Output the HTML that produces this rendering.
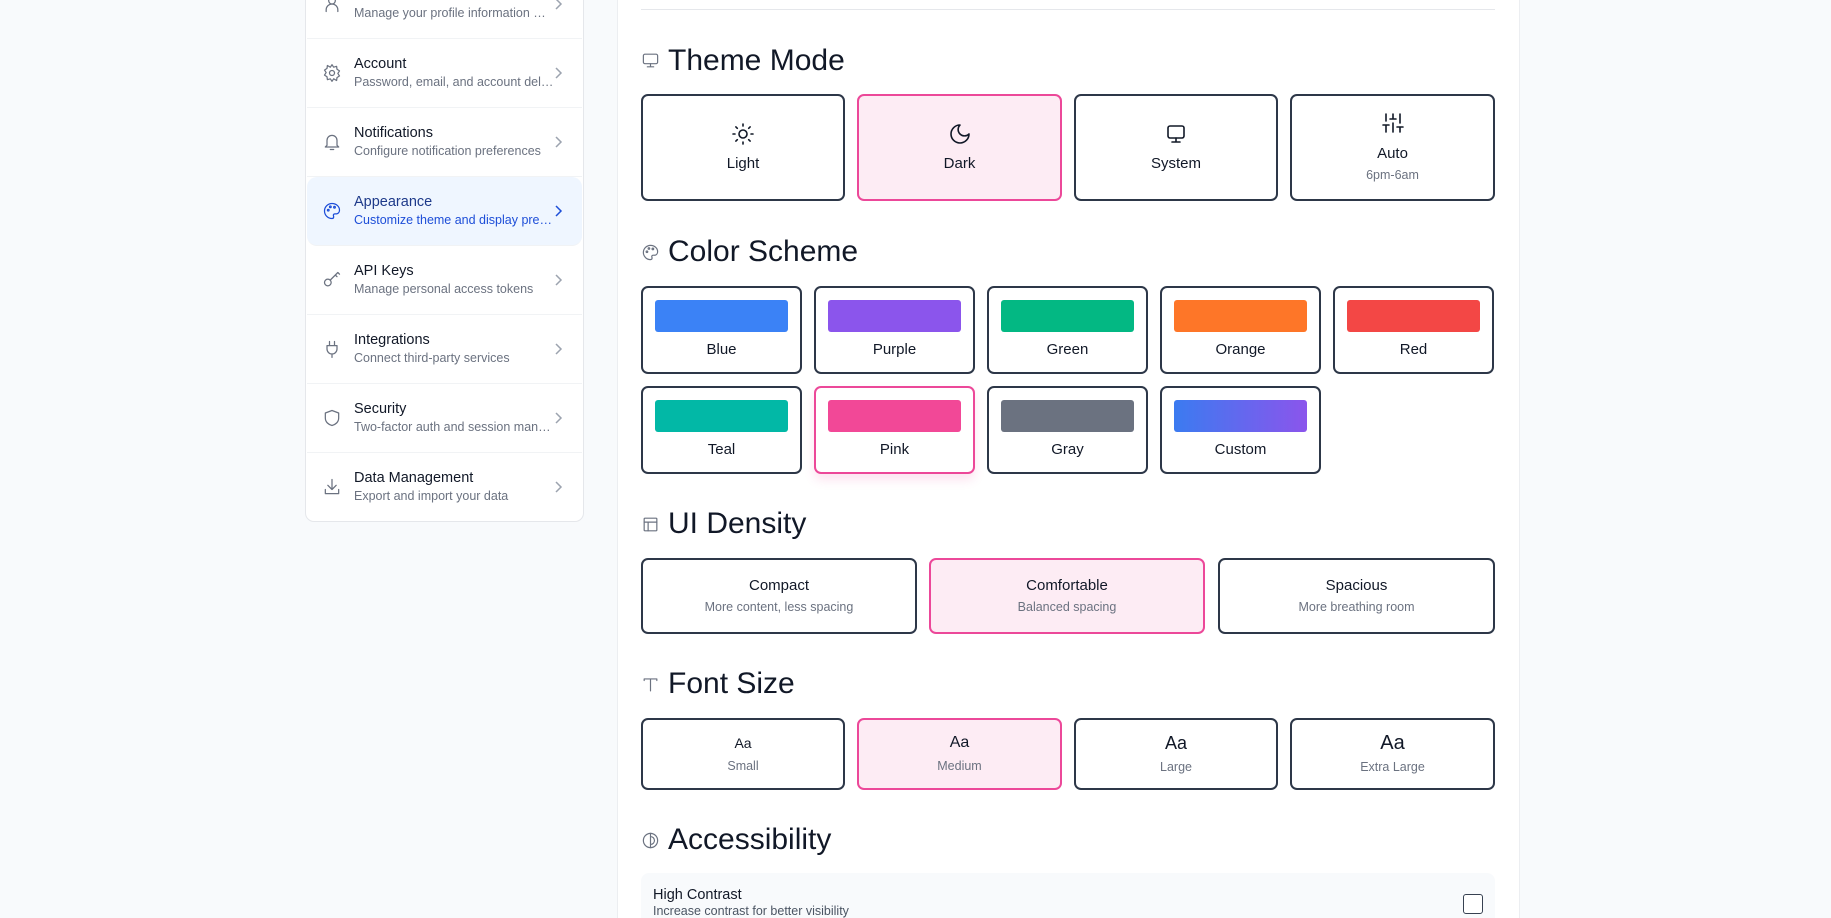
<!DOCTYPE html>
<html><head><meta charset="utf-8"><style>
*{box-sizing:border-box;margin:0;padding:0}
html{width:1831px;height:918px;overflow:hidden}
body{width:1831px;height:918px;overflow:hidden;background:#f8fafc;font-family:"Liberation Sans",sans-serif;color:#111827;position:relative}
.side{position:absolute;left:305px;top:-31px;width:279px;height:553px;background:#fff;border:1px solid #e5e7eb;border-radius:9px;overflow:hidden}
.item{position:absolute;left:1px;width:275px;height:69px;border-bottom:1px solid #f1f3f5}
.item.act{background:#eff6ff;border-radius:10px}
.item svg.ic{position:absolute;left:15px;top:24px;width:20px;height:20px;fill:none;stroke:#6b7280;stroke-width:1.5;stroke-linecap:round;stroke-linejoin:round}
.item.act svg.ic{stroke:#1d4ed8}
.item .t{position:absolute;left:47px;top:17px;font-size:14.5px;color:#111827}
.item .s{position:absolute;left:47px;top:36px;font-size:12.5px;color:#6b7280;white-space:nowrap}
.item.act .t{color:#1e3a8a}.item.act .s{color:#1d4ed8}
.item .ch{position:absolute;left:246px;top:27px;width:10px;height:14px;fill:none;stroke:#9ca3af;stroke-width:1.5}
.item.act .ch{stroke:#1d4ed8}
.main{position:absolute;left:617px;top:-10px;width:903px;height:928px;background:#fff;border-left:1px solid #eceef1;border-right:1px solid #eceef1}
.hr{position:absolute;left:641px;top:9px;width:854px;height:1px;background:#e5e7eb}
h2{position:absolute;left:668px;font-size:30px;font-weight:normal;color:#111827;line-height:36px}
.hi{position:absolute;left:641px;width:19px;height:19px;fill:none;stroke:#6b7280;stroke-width:1.5;stroke-linecap:round;stroke-linejoin:round}
.card{position:absolute;border:2px solid #2d3748;border-radius:7px;background:#fff;text-align:center}
.card.sel{border-color:#ec4899;background:#fdecf4}
.lbl{font-size:15px;color:#111827}
.sub{font-size:12.5px;color:#6b7280}
.sw{position:absolute;left:12px;right:12px;top:12px;height:32px;border-radius:3px}
.card .cl{position:absolute;left:0;right:0;top:53px;font-size:15px}
.card svg{width:24px;height:24px;fill:none;stroke:#111827;stroke-width:1.6;stroke-linecap:round;stroke-linejoin:round}
</style></head><body>
<div class="side">
 <div class="item" style="top:0"><svg class="ic" viewBox="0 0 24 24"><circle cx="12" cy="8" r="4"/><path d="M5 21v-2a7 7 0 0 1 14 0v2"/></svg><div class="t">Profile</div><div class="s">Manage your profile information …</div><svg class="ch" viewBox="0 0 10 14"><path d="M3 2l5 5-5 5"/></svg></div>
 <div class="item" style="top:69px"><svg class="ic" viewBox="0 0 24 24"><circle cx="12" cy="12" r="3"/><path d="M12 2l2 3 3.5-1 .5 3.5 3 2-2 3 2 3-3 2-.5 3.5L14 19l-2 3-2-3-3.5 1-.5-3.5-3-2 2-3-2-3 3-2 .5-3.5L10 5z"/></svg><div class="t">Account</div><div class="s">Password, email, and account del…</div><svg class="ch" viewBox="0 0 10 14"><path d="M3 2l5 5-5 5"/></svg></div>
 <div class="item" style="top:138px"><svg class="ic" viewBox="0 0 24 24"><path d="M6 16V10a6 6 0 0 1 12 0v6l2 2H4z"/><path d="M10 21h4"/></svg><div class="t">Notifications</div><div class="s">Configure notification preferences</div><svg class="ch" viewBox="0 0 10 14"><path d="M3 2l5 5-5 5"/></svg></div>
 <div class="item act" style="top:207px"><svg class="ic" viewBox="0 0 24 24"><path d="M12 3a9 9 0 1 0 0 18c1.5 0 2-1 2-2s-1-2 0-3 2-.5 3.5-.5A4.5 4.5 0 0 0 21 11c0-4.5-4-8-9-8z"/><circle cx="7.5" cy="11" r="1"/><circle cx="10" cy="7" r="1"/><circle cx="15" cy="7.5" r="1"/></svg><div class="t">Appearance</div><div class="s">Customize theme and display pre…</div><svg class="ch" viewBox="0 0 10 14"><path d="M3 2l5 5-5 5"/></svg></div>
 <div class="item" style="top:276px"><svg class="ic" viewBox="0 0 24 24"><circle cx="7" cy="15" r="4"/><path d="M10 12l9-9M16 6l2 2M19 3l2 2"/></svg><div class="t">API Keys</div><div class="s">Manage personal access tokens</div><svg class="ch" viewBox="0 0 10 14"><path d="M3 2l5 5-5 5"/></svg></div>
 <div class="item" style="top:345px"><svg class="ic" viewBox="0 0 24 24"><path d="M9 3v5M15 3v5M6 8h12v4a6 6 0 0 1-12 0zM12 18v4"/></svg><div class="t">Integrations</div><div class="s">Connect third-party services</div><svg class="ch" viewBox="0 0 10 14"><path d="M3 2l5 5-5 5"/></svg></div>
 <div class="item" style="top:414px"><svg class="ic" viewBox="0 0 24 24"><path d="M12 3l8 3v6c0 5-4 8-8 9-4-1-8-4-8-9V6z"/></svg><div class="t">Security</div><div class="s">Two-factor auth and session man…</div><svg class="ch" viewBox="0 0 10 14"><path d="M3 2l5 5-5 5"/></svg></div>
 <div class="item" style="top:483px;border:none"><svg class="ic" viewBox="0 0 24 24"><path d="M12 3v12M7 10l5 5 5-5M4 15v5h16v-5"/></svg><div class="t">Data Management</div><div class="s">Export and import your data</div><svg class="ch" viewBox="0 0 10 14"><path d="M3 2l5 5-5 5"/></svg></div>
</div>
<div class="main"></div>
<div class="hr"></div>

<svg class="hi" style="top:51px" viewBox="0 0 24 24"><rect x="3" y="4" width="18" height="12" rx="2"/><path d="M12 16v4M8 20h8"/></svg>
<h2 style="top:43px">Theme Mode</h2>
<div class="card" style="left:641px;top:94px;width:204px;height:107px"><svg style="margin-top:26px" viewBox="0 0 24 24"><circle cx="12" cy="12" r="4"/><path d="M12 2v2M12 20v2M4.9 4.9l1.4 1.4M17.7 17.7l1.4 1.4M2 12h2M20 12h2M4.9 19.1l1.4-1.4M17.7 6.3l1.4-1.4"/></svg><div class="lbl" style="margin-top:4px">Light</div></div>
<div class="card sel" style="left:857px;top:94px;width:205px;height:107px"><svg style="margin-top:26px" viewBox="0 0 24 24"><path d="M12 3a6 6 0 0 0 9 9 9 9 0 1 1-9-9z"/></svg><div class="lbl" style="margin-top:4px">Dark</div></div>
<div class="card" style="left:1074px;top:94px;width:204px;height:107px"><svg style="margin-top:26px" viewBox="0 0 24 24"><rect x="4" y="4" width="16" height="12" rx="2"/><path d="M12 16v4M8 20h8"/></svg><div class="lbl" style="margin-top:4px">System</div></div>
<div class="card" style="left:1290px;top:94px;width:205px;height:107px"><svg style="margin-top:15px" viewBox="0 0 24 24"><path d="M5 21v-7M5 10V3M12 21v-9M12 8V3M19 21v-5M19 12V3M2 14h6M9 8h6M16 16h6"/></svg><div class="lbl" style="margin-top:5px">Auto</div><div class="sub" style="margin-top:6px">6pm-6am</div></div>

<svg class="hi" style="top:243px" viewBox="0 0 24 24"><path d="M12 3a9 9 0 1 0 0 18c1.5 0 2-1 2-2s-1-2 0-3 2-.5 3.5-.5A4.5 4.5 0 0 0 21 11c0-4.5-4-8-9-8z"/><circle cx="7.5" cy="11" r="1"/><circle cx="10" cy="7" r="1"/><circle cx="15" cy="7.5" r="1"/></svg>
<h2 style="top:234px">Color Scheme</h2>
<div class="card" style="left:641px;top:286px;width:161px;height:88px"><div class="sw" style="background:#3b82f6"></div><div class="cl">Blue</div></div>
<div class="card" style="left:814px;top:286px;width:161px;height:88px"><div class="sw" style="background:#8b55ec"></div><div class="cl">Purple</div></div>
<div class="card" style="left:987px;top:286px;width:161px;height:88px"><div class="sw" style="background:#03b883"></div><div class="cl">Green</div></div>
<div class="card" style="left:1160px;top:286px;width:161px;height:88px"><div class="sw" style="background:#fe7628"></div><div class="cl">Orange</div></div>
<div class="card" style="left:1333px;top:286px;width:161px;height:88px"><div class="sw" style="background:#f34745"></div><div class="cl">Red</div></div>
<div class="card" style="left:641px;top:386px;width:161px;height:88px"><div class="sw" style="background:#02b8a6"></div><div class="cl">Teal</div></div>
<div class="card sel" style="left:814px;top:386px;width:161px;height:88px;background:#fff;box-shadow:0 6px 10px rgba(236,72,153,.15)"><div class="sw" style="background:#f24897"></div><div class="cl">Pink</div></div>
<div class="card" style="left:987px;top:386px;width:161px;height:88px"><div class="sw" style="background:#6b7280"></div><div class="cl">Gray</div></div>
<div class="card" style="left:1160px;top:386px;width:161px;height:88px"><div class="sw" style="background:linear-gradient(90deg,#3b7bf0,#8b55ec)"></div><div class="cl">Custom</div></div>

<svg class="hi" style="top:515px" viewBox="0 0 24 24"><rect x="4" y="4" width="16" height="16" rx="1"/><path d="M4 9h16M9 9v11"/></svg>
<h2 style="top:506px">UI Density</h2>
<div class="card" style="left:641px;top:558px;width:276px;height:76px"><div class="lbl" style="margin-top:17px">Compact</div><div class="sub" style="margin-top:6px">More content, less spacing</div></div>
<div class="card sel" style="left:929px;top:558px;width:276px;height:76px"><div class="lbl" style="margin-top:17px">Comfortable</div><div class="sub" style="margin-top:6px">Balanced spacing</div></div>
<div class="card" style="left:1218px;top:558px;width:277px;height:76px"><div class="lbl" style="margin-top:17px">Spacious</div><div class="sub" style="margin-top:6px">More breathing room</div></div>

<svg class="hi" style="top:675px" viewBox="0 0 24 24"><path d="M4 5h16M12 5v15M4 5v2M20 5v2"/></svg>
<h2 style="top:666px">Font Size</h2>
<div class="card" style="left:641px;top:718px;width:204px;height:72px"><div style="margin-top:15px;font-size:14px">Aa</div><div class="sub" style="margin-top:8px">Small</div></div>
<div class="card sel" style="left:857px;top:718px;width:205px;height:72px"><div style="margin-top:14px;font-size:16px">Aa</div><div class="sub" style="margin-top:7px">Medium</div></div>
<div class="card" style="left:1074px;top:718px;width:204px;height:72px"><div style="margin-top:13px;font-size:18px">Aa</div><div class="sub" style="margin-top:6px">Large</div></div>
<div class="card" style="left:1290px;top:718px;width:205px;height:72px"><div style="margin-top:12px;font-size:20px">Aa</div><div class="sub" style="margin-top:5px">Extra Large</div></div>

<svg class="hi" style="top:831px" viewBox="0 0 24 24"><circle cx="12" cy="12" r="9"/><path d="M12 3v18M12 7a5 5 0 0 1 0 10"/></svg>
<h2 style="top:822px">Accessibility</h2>
<div style="position:absolute;left:641px;top:873px;width:854px;height:45px;background:#f8fafc;border-radius:8px 8px 0 0"></div>
<div style="position:absolute;left:653px;top:887px;font-size:14.5px">High Contrast</div>
<div style="position:absolute;left:653px;top:905px;font-size:12.5px;color:#4b5563;line-height:13px;height:13px;overflow:hidden">Increase contrast for better visibility</div>
<div style="position:absolute;left:1463px;top:894px;width:20px;height:20px;border:1.5px solid #374151;border-radius:3px;background:#fff"></div>
</body></html>
